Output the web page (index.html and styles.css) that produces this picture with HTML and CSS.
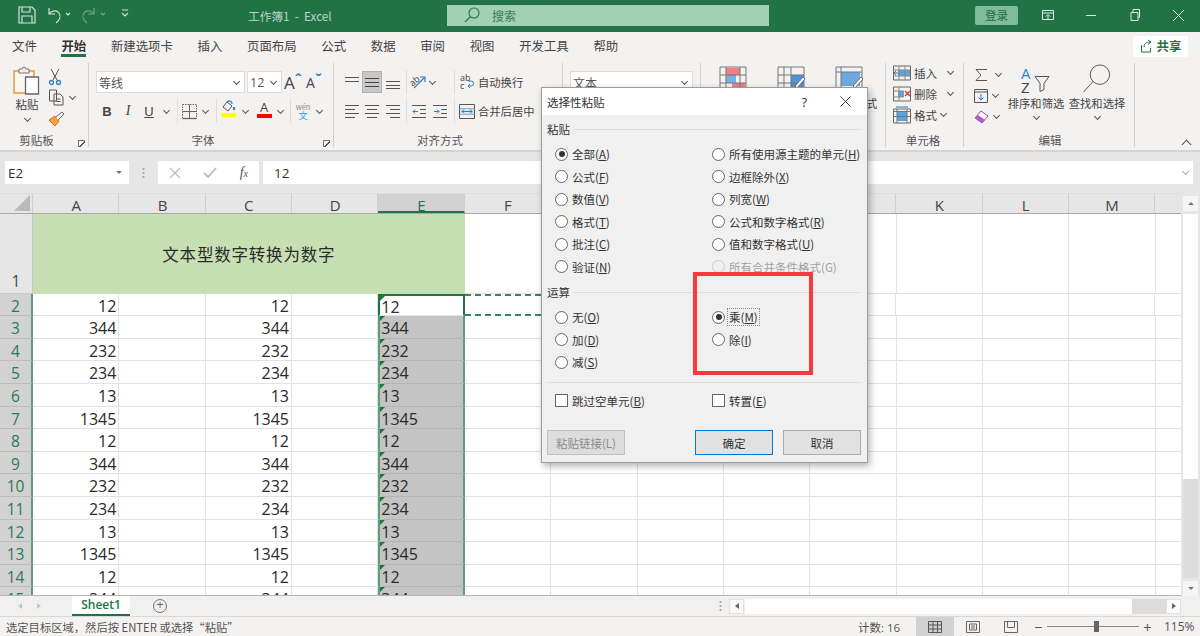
FILE: index.html
```html
<!DOCTYPE html>
<html lang="zh-CN">
<head>
    <meta charset="UTF-8">
    <title>工作簿1 - Excel</title>
    <link rel="stylesheet" href="styles.css">
</head>
<body>
<div class="app">

    <!-- title bar -->
    <header class="titlebar">
        <svg class="qat" width="248" height="32" viewBox="0 0 248 32" fill="none" stroke="#cfe3d8" stroke-width="1.2">
            <path d="M19 8h13l3 3v13H19zM22 8v5h8V8M22 24v-7h10v7"/>
            <path d="M49 9v6h6M49 15c3-4 8-4 10-1 2 3 1 7-3 10"/>
            <path d="M66 14l2 2 2-2"/>
            <g stroke="#6fa488"><path d="M94 9v6h-6M94 15c-3-4-8-4-10-1-2 3-1 7 3 10"/><path d="M101 14l2 2 2-2"/></g>
            <path d="M122 11h6M122 14l3 3 3-3"/>
        </svg>
        <div class="doc-name">工作簿1&nbsp; -&nbsp; Excel</div>
        <div class="search">
            <svg width="18" height="18" viewBox="0 0 18 18" fill="none" stroke="#2c6e4a" stroke-width="1.1"><circle cx="11" cy="7" r="5"/><path d="M7.5 10.5L2 16"/></svg>
            <span>搜索</span>
        </div>
        <div class="login">登录</div>
        <div class="winbtn"><svg width="14" height="14" viewBox="0 0 14 14" fill="none" stroke="#dcebe3"><path d="M1.5 2.5h11v9h-11zM1.5 5h11M7 11V7M5 8.5l2-2 2 2"/></svg></div>
        <div class="winbtn"><svg width="12" height="12" viewBox="0 0 12 12" stroke="#dcebe3"><path d="M1 6.5h10"/></svg></div>
        <div class="winbtn"><svg width="12" height="14" viewBox="0 0 12 14" fill="none" stroke="#dcebe3"><path d="M2 4.5h7v8H2zM4 4.5v-3h6.5v8H9"/></svg></div>
        <div class="winbtn"><svg width="13" height="13" viewBox="0 0 13 13" stroke="#dcebe3"><path d="M1 1l11 11M12 1L1 12"/></svg></div>
    </header>

    <!-- ribbon tabs -->
    <nav class="tabs">
        <span>文件</span>
        <span class="active">开始</span>
        <span>新建选项卡</span>
        <span>插入</span>
        <span>页面布局</span>
        <span>公式</span>
        <span>数据</span>
        <span>审阅</span>
        <span>视图</span>
        <span>开发工具</span>
        <span>帮助</span>
        <div class="share">
            <svg width="13" height="14" viewBox="0 0 13 14" fill="none" stroke="#217346"><path d="M1.5 6v7h9V9M4 8c0-3 2-5 6-5M8 1l3 2-3 2.5"/></svg>
            <b>共享</b>
        </div>
    </nav>

    <!-- ribbon -->
    <section class="ribbon">
        <div class="group g-clip">
            <div class="clip-body">
                <div class="paste">
                    <svg width="30" height="34" viewBox="0 0 30 34">
                        <path d="M2 5h20v22H2z" fill="#fbf5ec" stroke="#e8973f" stroke-width="1.5"/>
                        <path d="M7 3h3a2 2 0 0 1 4 0h3v4H7z" fill="#f3f2f1" stroke="#777"/>
                        <path d="M13.5 11h13v17h-13z" fill="#fff" stroke="#666" stroke-width="1.3"/>
                    </svg>
                    <span>粘贴</span>
                    <i class="chev"></i>
                </div>
                <div class="clip-tools">
                    <div class="tool-row">
                        <svg width="14" height="18" viewBox="0 0 14 18" fill="none" stroke="#555"><path d="M3 1l6 11M11 1L5 12"/><g stroke="#2f7fc4" stroke-width="1.3"><circle cx="3.5" cy="14.5" r="2"/><circle cx="10.5" cy="14.5" r="2"/></g></svg>
                    </div>
                    <div class="tool-row">
                        <svg width="17" height="17" viewBox="0 0 17 17" fill="none" stroke="#555"><path d="M1.5 1h7v11h-7zM6 5h6l3 3v8H6zM8.5 10h4M8.5 12.5h4"/></svg>
                        <i class="chev"></i>
                    </div>
                    <div class="tool-row">
                        <svg width="17" height="16" viewBox="0 0 17 16"><path d="M1 9l6-4 4 5-4 5z" fill="#f6a13b" stroke="#d9701a"/><path d="M8 6l6-5 2 2-6 6" fill="#fff" stroke="#666"/></svg>
                    </div>
                </div>
            </div>
            <div class="group-label">剪贴板<i class="launcher"></i></div>
        </div>

        <div class="group g-font">
            <div class="rows">
                <div class="rrow">
                    <div class="combo w149">等线<i class="chev"></i></div>
                    <div class="combo w35 combo-size">12<i class="chev"></i></div>
                    <div class="slot w20 big-a">A<em>ˆ</em></div>
                    <div class="slot w20 small-a">A<em>ˇ</em></div>
                </div>
                <div class="rrow">
                    <div class="slot w22 fmt"><b>B</b></div>
                    <div class="slot w20 fmt"><i>I</i></div>
                    <div class="slot w22 fmt"><u>U</u></div>
                    <div class="slot w12"><i class="chev"></i></div>
                    <div class="sep w9"></div>
                    <div class="slot w16"><svg width="15" height="15" viewBox="0 0 15 15" fill="none" stroke="#666"><path d="M.5.5h14v14H.5z" stroke-dasharray="1.5 1"/><path d="M7.5.5v14M.5 7.5h14"/><path d="M.5 14.5h14" stroke-width="1.3"/></svg></div>
                    <div class="slot w16"><i class="chev"></i></div>
                    <div class="sep w6"></div>
                    <div class="slot w18 colored">
                        <svg width="16" height="13" viewBox="0 0 16 13" fill="none"><path d="M3 7l4-5 5 4-4 5z" stroke="#555"/><path d="M7 2c2-2 5-1 5 2" stroke="#2f7fc4" stroke-width="1.3"/><path d="M14 7v3" stroke="#2f7fc4" stroke-width="2"/></svg>
                        <i class="swatch yellow"></i>
                    </div>
                    <div class="slot w16"><i class="chev"></i></div>
                    <div class="slot w22 colored">
                        <span class="font-a">A</span>
                        <i class="swatch red"></i>
                    </div>
                    <div class="slot w10"><i class="chev"></i></div>
                    <div class="sep w10"></div>
                    <div class="slot w16 wen"><span>wén</span><em>文</em></div>
                    <div class="slot w16"><i class="chev"></i></div>
                </div>
            </div>
            <div class="group-label">字体<i class="launcher"></i></div>
        </div>

        <div class="group g-align">
            <div class="rows">
                <div class="rrow">
                    <div class="slot w21"><svg width="16" height="14" viewBox="0 0 16 14" stroke="#555"><path d="M1 2.5h14M1 6.5h14"/></svg></div>
                    <div class="slot w20 pressed"><svg width="16" height="14" viewBox="0 0 16 14" stroke="#444"><path d="M1 3.5h14M1 7.5h14M1 11.5h14"/></svg></div>
                    <div class="slot w22"><svg width="16" height="14" viewBox="0 0 16 14" stroke="#555"><path d="M1 6.5h14M1 10.5h14M1 13.5h14"/></svg></div>
                    <div class="sep w4"></div>
                    <div class="slot w20"><svg width="18" height="16" viewBox="0 0 18 16" fill="none"><text x="1" y="10" transform="rotate(-40 6 8)" class="ab">ab</text><path d="M5 14L15 4M11 3h5v5" stroke="#2f7fc4" stroke-width="1.2"/></svg></div>
                    <div class="slot w9"><i class="chev"></i></div>
                    <div class="w15"></div>
                    <div class="sep w4"></div>
                    <div class="slot w22"><svg width="14" height="18" viewBox="0 0 14 18" fill="none"><text x="0" y="8" class="ab">ab</text><text x="0" y="16" class="ab">c</text><path d="M8 13h3a2.5 2.5 0 0 0 0-5H8M8 13l2-2M8 13l2 2" stroke="#2f7fc4"/></svg></div>
                    <span class="cmd">自动换行</span>
                </div>
                <div class="rrow">
                    <div class="slot w21"><svg width="16" height="14" viewBox="0 0 16 14" stroke="#555"><path d="M1 1.5h14M1 5.5h10M1 9.5h14M1 13.5h10"/></svg></div>
                    <div class="slot w20"><svg width="16" height="14" viewBox="0 0 16 14" stroke="#555"><path d="M1 1.5h14M3 5.5h10M1 9.5h14M3 13.5h10"/></svg></div>
                    <div class="slot w22"><svg width="16" height="14" viewBox="0 0 16 14" stroke="#555"><path d="M1 1.5h14M5 5.5h10M1 9.5h14M5 13.5h10"/></svg></div>
                    <div class="sep w4"></div>
                    <div class="slot w22"><svg width="16" height="14" viewBox="0 0 16 14" fill="none"><path d="M1 1.5h14M9 5.5h6M9 9.5h6M1 13.5h14" stroke="#555"/><path d="M7 7.5H2M4 5.5l-2 2 2 2" stroke="#2f7fc4"/></svg></div>
                    <div class="slot w20"><svg width="16" height="14" viewBox="0 0 16 14" fill="none"><path d="M1 1.5h14M9 5.5h6M9 9.5h6M1 13.5h14" stroke="#555"/><path d="M2 7.5h5M5 5.5l2 2-2 2" stroke="#2f7fc4"/></svg></div>
                    <div class="w2"></div>
                    <div class="sep w4"></div>
                    <div class="slot w22"><svg width="16" height="15" viewBox="0 0 16 15" fill="none"><path d="M.5.5h15v14H.5z" stroke="#555"/><path d="M.5 4.5h15M.5 10.5h15" stroke="#777"/><path d="M1 4.5h14v6H1z" fill="#cfe4f5"/><path d="M3 7.5h10M5 5.5l-2 2 2 2M11 5.5l2 2-2 2" stroke="#2f7fc4"/></svg></div>
                    <span class="cmd">合并后居中</span>
                </div>
            </div>
            <div class="group-label">对齐方式</div>
        </div>

        <div class="group g-number">
            <div class="rows">
                <div class="rrow"><div class="combo w123">文本<i class="chev"></i></div></div>
            </div>
            <div class="group-label">数字</div>
        </div>

        <div class="group g-styles">
            <div class="style-body">
                <div class="style-btn">
                    <svg width="32" height="30" viewBox="0 0 32 30" fill="none"><path d="M3 1h26v26H3z" stroke="#777"/><path d="M9 2h14v7H9zM15 17h14v8H15z" fill="#f07f86"/><path d="M9 9h10v8H9z" fill="#78b1e4"/><path d="M3 9h26M3 17h26M9 1v26M23 1v26" stroke="#777"/></svg>
                    <span>条件格式</span>
                </div>
                <div class="style-btn">
                    <svg width="32" height="30" viewBox="0 0 32 30" fill="none"><path d="M3 1h26v26H3z" stroke="#777"/><path d="M16 9h13v12H16z" fill="#4d94d8"/><path d="M3 9h26M3 17h26M9 1v26M16 1v26" stroke="#777"/><path d="M20 20l8-9 2 2-8 9z" fill="#fff" stroke="#666"/></svg>
                    <span>套用<br>表格格式</span>
                </div>
                <div class="style-btn">
                    <svg width="32" height="30" viewBox="0 0 32 30" fill="none"><path d="M3 1h26v26H3z" stroke="#777"/><path d="M8 6h19v14H8z" fill="#6fa8e0"/><path d="M3 6h26M8 1v26" stroke="#777"/><path d="M20 20l8-9 2 2-8 9z" fill="#fff" stroke="#666"/></svg>
                    <span>单元格样式</span>
                </div>
            </div>
            <div class="group-label">样式</div>
        </div>

        <div class="group g-cells">
            <div class="cell-rows">
                <div class="cell-row">
                    <svg width="18" height="16" viewBox="0 0 18 16" fill="none"><path d="M.5 1h17v14H.5z" stroke="#666"/><path d="M5 5h12v6H5z" fill="#5aa4e0"/><path d="M6 1v14M12 1v14M.5 5h17M.5 11h17" stroke="#888"/><path d="M5 8H1M3 6L1 8l2 2" stroke="#1f78c8"/></svg>
                    <span class="w23">插入</span><i class="chev cell-chev"></i>
                </div>
                <div class="cell-row">
                    <svg width="18" height="16" viewBox="0 0 18 16" fill="none"><path d="M.5 1h17v14H.5z" stroke="#666"/><path d="M5 5h6v6H5z" fill="#5aa4e0"/><path d="M.5 5h10M.5 11h10M6 1v14" stroke="#888"/><path d="M12 5l5 5M17 5l-5 5" stroke="#e0323a" stroke-width="1.4"/></svg>
                    <span class="w23">删除</span><i class="chev cell-chev"></i>
                </div>
                <div class="cell-row">
                    <svg width="18" height="18" viewBox="0 0 18 18" fill="none"><path d="M.5 3h17v14H.5z" stroke="#666"/><path d="M4 5h10v10H4z" fill="#5aa4e0"/><path d="M.5 5.5h17M.5 10.5h17M4 3v14M14 3v14" stroke="#777"/><path d="M3 1h12" stroke="#1f78c8"/></svg>
                    <span class="w23">格式</span><i class="chev chev-near"></i>
                </div>
            </div>
            <div class="group-label">单元格</div>
        </div>

        <div class="group g-edit">
            <div class="edit-body">
                <div class="edit-tools">
                    <div class="edit-row">
                        <svg width="14" height="14" viewBox="0 0 14 14" fill="none" stroke="#555"><path d="M13 1.5H2l5 5.5-5 5.5h11"/></svg>
                        <i class="chev chev-far"></i>
                    </div>
                    <div class="edit-row">
                        <svg width="14" height="14" viewBox="0 0 14 14" fill="none"><path d="M.5.5h13v13H.5zM.5 3h13" stroke="#555"/><path d="M7 5v6M4.5 8.5L7 11l2.5-2.5" stroke="#1f78c8"/></svg>
                        <i class="chev"></i>
                    </div>
                    <div class="edit-row">
                        <svg width="15" height="14" viewBox="0 0 15 14"><path d="M1 8l6-7 7 5-6 7z" fill="#fff" stroke="#a24bb3"/><path d="M1 8l3-3 7 5-3 3z" fill="#b35cc4"/></svg>
                        <i class="chev"></i>
                    </div>
                </div>
                <div class="edit-big">
                    <svg width="30" height="29" viewBox="0 0 30 29" fill="none"><text x="0" y="13" class="az az-a">A</text><text x="0" y="27" class="az">Z</text><path d="M14 11h14l-5 7v6l-4 2v-8z" stroke="#555"/></svg>
                    <span>排序和筛选</span>
                    <i class="chev"></i>
                </div>
                <div class="edit-big">
                    <svg width="30" height="33" viewBox="0 0 30 33" fill="none" stroke="#555"><circle cx="18" cy="11" r="10"/><path d="M11 18L1 29"/></svg>
                    <span>查找和选择</span>
                    <i class="chev"></i>
                </div>
            </div>
            <div class="group-label">编辑</div>
        </div>

        <div class="ribbon-end"><i class="chev chev-up"></i></div>
    </section>

    <!-- formula bar -->
    <section class="formula">
        <div class="namebox">E2<i class="tri"></i></div>
        <div class="grip"></div>
        <div class="fx-box">
            <svg width="12" height="12" viewBox="0 0 12 12" stroke="#bbb" stroke-width="1.3"><path d="M1 1l10 10M11 1L1 11"/></svg>
            <svg width="14" height="12" viewBox="0 0 14 12" fill="none" stroke="#bbb" stroke-width="1.8"><path d="M1 6l4 4 8-9"/></svg>
            <span>f<small>x</small></span>
        </div>
        <div class="input">12<i class="chev"></i></div>
    </section>

    <!-- sheet -->
    <section class="main">
        <div class="sheet">
            <div class="colhead">
                <div class="corner"><i></i></div>
                <div>A</div><div>B</div><div>C</div><div>D</div><div class="on">E</div><div>F</div>
                <div>G</div><div>H</div><div>I</div><div>J</div><div>K</div><div>L</div><div>M</div><div></div>
            </div>
            <div class="row row-title">
                <div class="rh">1</div>
                <div class="merged">文本型数字转换为数字</div>
                <div class="fill"></div>
            </div>
            <div class="row">
                <div class="rh on">2</div><div class="c n">12</div><div class="c"></div><div class="c n">12</div><div class="c"></div>
                <div class="c t active-cell">12</div><div class="c ants"></div><div class="fill"></div>
            </div>
            <div class="row">
                <div class="rh on">3</div><div class="c n">344</div><div class="c"></div><div class="c n">344</div><div class="c"></div>
                <div class="c t sel">344</div><div class="fill"></div>
            </div>
            <div class="row">
                <div class="rh on">4</div><div class="c n">232</div><div class="c"></div><div class="c n">232</div><div class="c"></div>
                <div class="c t sel">232</div><div class="fill"></div>
            </div>
            <div class="row">
                <div class="rh on">5</div><div class="c n">234</div><div class="c"></div><div class="c n">234</div><div class="c"></div>
                <div class="c t sel">234</div><div class="fill"></div>
            </div>
            <div class="row">
                <div class="rh on">6</div><div class="c n">13</div><div class="c"></div><div class="c n">13</div><div class="c"></div>
                <div class="c t sel">13</div><div class="fill"></div>
            </div>
            <div class="row">
                <div class="rh on">7</div><div class="c n">1345</div><div class="c"></div><div class="c n">1345</div><div class="c"></div>
                <div class="c t sel">1345</div><div class="fill"></div>
            </div>
            <div class="row">
                <div class="rh on">8</div><div class="c n">12</div><div class="c"></div><div class="c n">12</div><div class="c"></div>
                <div class="c t sel">12</div><div class="fill"></div>
            </div>
            <div class="row">
                <div class="rh on">9</div><div class="c n">344</div><div class="c"></div><div class="c n">344</div><div class="c"></div>
                <div class="c t sel">344</div><div class="fill"></div>
            </div>
            <div class="row">
                <div class="rh on">10</div><div class="c n">232</div><div class="c"></div><div class="c n">232</div><div class="c"></div>
                <div class="c t sel">232</div><div class="fill"></div>
            </div>
            <div class="row">
                <div class="rh on">11</div><div class="c n">234</div><div class="c"></div><div class="c n">234</div><div class="c"></div>
                <div class="c t sel">234</div><div class="fill"></div>
            </div>
            <div class="row">
                <div class="rh on">12</div><div class="c n">13</div><div class="c"></div><div class="c n">13</div><div class="c"></div>
                <div class="c t sel">13</div><div class="fill"></div>
            </div>
            <div class="row">
                <div class="rh on">13</div><div class="c n">1345</div><div class="c"></div><div class="c n">1345</div><div class="c"></div>
                <div class="c t sel">1345</div><div class="fill"></div>
            </div>
            <div class="row">
                <div class="rh on">14</div><div class="c n">12</div><div class="c"></div><div class="c n">12</div><div class="c"></div>
                <div class="c t sel">12</div><div class="fill"></div>
            </div>
            <div class="row">
                <div class="rh on">15</div><div class="c n">344</div><div class="c"></div><div class="c n">344</div><div class="c"></div>
                <div class="c t sel">344</div><div class="fill"></div>
            </div>
        </div>
        <div class="vscroll">
            <div class="sb-btn"><i class="tri tri-up"></i></div>
            <div class="sb-thumb"></div>
            <div class="sb-track"></div>
            <div class="sb-btn"><i class="tri"></i></div>
        </div>
    </section>

    <!-- sheet tabs -->
    <section class="sheetbar">
        <div class="nav-arrows"><i class="arrow-l"></i><i class="arrow-r"></i></div>
        <div class="sheet-tab">Sheet1</div>
        <div class="add-sheet">+</div>
        <div class="grip-h"></div>
        <div class="hscroll">
            <div class="hs-btn"><i class="arrow-l dark"></i></div>
            <div class="hs-thumb"></div>
            <div class="hs-track"></div>
            <div class="hs-btn"><i class="arrow-r dark"></i></div>
        </div>
    </section>

    <!-- status bar -->
    <footer class="status">
        <span class="status-msg">选定目标区域，然后按 ENTER 或选择“粘贴”</span>
        <span class="count">计数: 16</span>
        <div class="view on"><svg width="14" height="12" viewBox="0 0 14 12" fill="none" stroke="#555"><path d="M.5.5h13v11H.5zM.5 4h13M.5 8h13M5 .5v11M9.5.5v11"/></svg></div>
        <div class="view"><svg width="14" height="12" viewBox="0 0 14 12" fill="none" stroke="#666"><path d="M.5.5h13v11H.5zM3.5 3h7v6h-7zM5 5h4M5 7h4"/></svg></div>
        <div class="view"><svg width="14" height="12" viewBox="0 0 14 12" fill="none" stroke="#666"><path d="M.5.5h13v11H.5zM3.5.5v6h7v-6"/></svg></div>
        <div class="zoom">
            <span class="zoom-sign">−</span>
            <div class="zoom-track"><i></i></div>
            <span class="zoom-sign">+</span>
        </div>
        <span class="pct">115%</span>
    </footer>

    <!-- paste special dialog -->
    <div class="dialog">
        <div class="dlg-title">
            <span>选择性粘贴</span>
            <em>?</em>
            <svg width="11" height="11" viewBox="0 0 11 11" stroke="#444"><path d="M.5.5l10 10M10.5.5l-10 10"/></svg>
        </div>
        <div class="dlg-body">
            <div class="legend">粘贴</div>
            <div class="opts">
                <label class="opt"><i class="radio checked"></i><span>全部(<u>A</u>)</span></label>
                <label class="opt"><i class="radio"></i><span>所有使用源主题的单元(<u>H</u>)</span></label>
                <label class="opt"><i class="radio"></i><span>公式(<u>F</u>)</span></label>
                <label class="opt"><i class="radio"></i><span>边框除外(<u>X</u>)</span></label>
                <label class="opt"><i class="radio"></i><span>数值(<u>V</u>)</span></label>
                <label class="opt"><i class="radio"></i><span>列宽(<u>W</u>)</span></label>
                <label class="opt"><i class="radio"></i><span>格式(<u>T</u>)</span></label>
                <label class="opt"><i class="radio"></i><span>公式和数字格式(<u>R</u>)</span></label>
                <label class="opt"><i class="radio"></i><span>批注(<u>C</u>)</span></label>
                <label class="opt"><i class="radio"></i><span>值和数字格式(<u>U</u>)</span></label>
                <label class="opt"><i class="radio"></i><span>验证(<u>N</u>)</span></label>
                <label class="opt disabled"><i class="radio"></i><span>所有合并条件格式(G)</span></label>
            </div>
            <div class="legend legend-ops">运算</div>
            <div class="opts">
                <label class="opt"><i class="radio"></i><span>无(<u>O</u>)</span></label>
                <label class="opt"><i class="radio checked"></i><span class="focus">乘(<u>M</u>)</span></label>
                <label class="opt"><i class="radio"></i><span>加(<u>D</u>)</span></label>
                <label class="opt"><i class="radio"></i><span>除(<u>I</u>)</span></label>
                <label class="opt"><i class="radio"></i><span>减(<u>S</u>)</span></label>
            </div>
            <div class="dlg-rule"></div>
            <div class="opts">
                <label class="opt"><i class="check"></i><span>跳过空单元(<u>B</u>)</span></label>
                <label class="opt"><i class="check"></i><span>转置(<u>E</u>)</span></label>
            </div>
            <div class="dlg-btns">
                <button class="btn" disabled>粘贴链接(L)</button>
                <button class="btn default">确定</button>
                <button class="btn">取消</button>
            </div>
        </div>
    </div>

    <!-- red annotation box drawn over the dialog -->
    <div class="annot"></div>
</div>
</body>
</html>
```

FILE: styles.css
```css
* { box-sizing: border-box; }

html, body {
    margin: 0;
    padding: 0;
    height: 636px;
    overflow: hidden;
}

body {
    font-family: "Noto Sans CJK SC", "Liberation Sans", sans-serif;
    font-size: 12px;
    color: #444;
    background: #f3f2f1;
}

i, em { font-style: normal; }

svg { overflow: visible; }

.app {
    position: relative;
    display: flex;
    flex-direction: column;
    width: 1200px;
    height: 636px;
    overflow: hidden;
}

/* title bar */
.titlebar {
    display: flex;
    align-items: center;
    flex: none;
    height: 32px;
    padding-bottom: 2px;
    background: #217346;
    color: #cfe3d8;
}
.qat { flex: none; }
.doc-name {
    width: 199px;
    font-size: 11.7px;
    color: #bcd7c8;
}
.search {
    display: flex;
    align-items: center;
    width: 322px;
    height: 21px;
    padding-left: 16px;
    background: #a1d0b3;
    color: #3d7a59;
    font-size: 12px;
}
.search span { margin-left: 11px; }
.login {
    width: 43px;
    height: 19px;
    margin-left: 206px;
    margin-right: 8px;
    border-radius: 2px;
    background: #7fbb98;
    color: #1e6b42;
    font-size: 11.5px;
    line-height: 19px;
    text-align: center;
}
.winbtn {
    display: flex;
    align-items: center;
    justify-content: center;
    width: 43.5px;
    height: 30px;
}

/* tabs */
.tabs {
    display: flex;
    align-items: center;
    flex: none;
    gap: 24.7px;
    height: 28px;
    padding-left: 12px;
    background: #f3f2f1;
    font-size: 12.4px;
    color: #444;
}
.tabs > span {
    position: relative;
    line-height: 28px;
}
.tabs .active {
    font-weight: 700;
    color: #333;
}
.tabs .active::after {
    content: "";
    position: absolute;
    left: 0;
    right: 0;
    bottom: 3px;
    height: 3px;
    background: #217346;
}
.share {
    display: flex;
    align-items: center;
    justify-content: center;
    gap: 4px;
    width: 55px;
    height: 21px;
    margin-left: auto;
    margin-right: 12px;
    border-radius: 2px;
    background: #fff;
    color: #217346;
}

/* ribbon */
.ribbon {
    display: flex;
    flex: none;
    height: 92px;
    padding-bottom: 2px;
    background: #f3f2f1;
    border-bottom: 2px solid #d4d4d4;
}
.group {
    position: relative;
    display: flex;
    flex-direction: column;
    flex: none;
    height: 90px;
}
.group::after {
    content: "";
    position: absolute;
    top: 3px;
    right: 0;
    bottom: 3px;
    width: 1px;
    background: #cfcfcf;
}
.group-label {
    height: 20px;
    margin-top: auto;
    text-align: center;
    font-size: 11.5px;
    line-height: 20px;
    color: #555;
}
.launcher {
    position: absolute;
    right: 4px;
    bottom: 3px;
    width: 7px;
    height: 7px;
    border-left: 1px solid #777;
    border-top: 1px solid #777;
    background: linear-gradient(135deg, transparent 45%, #555 45% 60%, transparent 60%);
}
.g-clip { width: 89px; }
.g-clip .group-label { margin-right: 16px; }
.g-font { width: 245px; padding-left: 7px; }
.g-font .group-label { margin-right: 24px; }
.g-align { width: 229px; padding-left: 7px; }
.g-align .group-label { margin-right: 24px; }
.g-number { width: 138px; padding-left: 7px; }
.g-styles { width: 185px; }
.g-cells { width: 78px; padding-left: 7px; }
.g-cells .group-label { margin-right: 11px; }
.g-edit { width: 171px; padding-left: 7px; }
.g-edit .group-label { margin-right: 6px; }
.ribbon-end {
    display: flex;
    flex: 1;
    align-items: flex-end;
    justify-content: flex-end;
    padding: 0 10px 3px 0;
}

.rows {
    display: flex;
    flex-direction: column;
    gap: 7px;
    padding-top: 11px;
}
.rrow {
    display: flex;
    align-items: center;
    height: 22px;
}
.slot {
    display: flex;
    align-items: center;
    justify-content: center;
    flex: none;
    height: 22px;
}
.w2 { width: 2px; flex: none; }
.w4 { width: 4px; }
.w6 { width: 6px; }
.w9 { width: 9px; }
.w10 { width: 10px; }
.w12 { width: 12px; }
.w15 { width: 15px; flex: none; }
.w16 { width: 16px; }
.w18 { width: 18px; }
.w20 { width: 20px; }
.w21 { width: 21px; }
.w22 { width: 22px; }
.w23 { width: 23px; flex: none; }
.w35 { width: 35px; }
.w123 { width: 123px; }
.w149 { width: 149px; }

.sep {
    position: relative;
    flex: none;
    height: 24px;
}
.sep::before {
    content: "";
    position: absolute;
    left: 50%;
    top: 0;
    bottom: 0;
    width: 1px;
    background: #dcdcdc;
}

.chev {
    display: inline-block;
    flex: none;
    width: 5px;
    height: 5px;
    border-right: 1px solid #555;
    border-bottom: 1px solid #555;
    transform: translateY(-1px) rotate(45deg);
}
.chev-up {
    width: 7px;
    height: 7px;
    transform: translateY(3px) rotate(225deg);
}
.combo {
    display: flex;
    align-items: center;
    justify-content: space-between;
    flex: none;
    height: 22px;
    padding: 0 5px 0 2px;
    border: 1px solid #dcdcdc;
    background: #fff;
    font-size: 12px;
    color: #555;
}
.combo-size {
    margin-left: 2px;
    font-family: "Open Sans", sans-serif;
    font-size: 12.5px;
}
.big-a, .small-a {
    position: relative;
    margin-left: 1px;
    font-family: "Open Sans", sans-serif;
    color: #444;
    font-size: 17px;
}
.small-a { font-size: 14px; }
.big-a em, .small-a em {
    align-self: flex-start;
    font-size: 14px;
    line-height: 18px;
    color: #2f7fc4;
    font-weight: 700;
}
.fmt {
    font-family: "Liberation Sans", sans-serif;
    font-size: 13px;
    color: #444;
}
.fmt i {
    font-family: "Liberation Serif", serif;
    font-style: italic;
    font-size: 14px;
}
.colored {
    flex-direction: column;
    justify-content: flex-start;
}
.font-a {
    font-family: "Open Sans", sans-serif;
    font-size: 13px;
    line-height: 14px;
    color: #444;
}
.swatch {
    display: block;
    width: 15px;
    height: 4px;
}
.yellow { background: #ffff00; }
.red { background: #ff0000; }
.wen {
    flex-direction: column;
    color: #888;
    font-size: 7.5px;
    line-height: 9px;
}
.wen em {
    color: #2f9be0;
    font-size: 9px;
    line-height: 10px;
}
.pressed {
    background: #c8c8c8;
    border: 1px solid #b2b2b2;
}
.ab {
    font-family: "Open Sans", sans-serif;
    font-size: 9px;
    fill: #444;
}
.cmd {
    font-size: 11.3px;
    white-space: nowrap;
    color: #444;
}

/* clipboard */
.clip-body {
    display: flex;
    padding-top: 6px;
}
.paste {
    display: flex;
    flex-direction: column;
    align-items: center;
    width: 43px;
    padding-left: 11px;
    font-size: 11.5px;
    line-height: 16px;
}
.paste svg { margin-bottom: -4px; }
.paste .chev { margin-top: 5px; }
.clip-tools {
    display: flex;
    flex-direction: column;
    width: 40px;
    padding-left: 5px;
}
.tool-row {
    display: flex;
    align-items: center;
    gap: 5px;
    height: 21px;
}

/* styles group, mostly behind the dialog */
.style-body {
    display: flex;
    padding: 6px 0 0 3px;
}
.style-btn {
    display: flex;
    flex-direction: column;
    align-items: center;
    width: 58px;
    font-size: 11.3px;
    line-height: 15px;
    text-align: center;
    white-space: nowrap;
}

/* cells */
.cell-rows {
    display: flex;
    flex-direction: column;
    padding-top: 2px;
}
.cell-row {
    display: flex;
    align-items: center;
    gap: 3px;
    height: 21px;
    font-size: 11.5px;
    white-space: nowrap;
}
.cell-chev { margin-left: 8px; }
.chev-near { margin-left: 1px; }

/* editing */
.edit-body {
    display: flex;
    gap: 5px;
    padding-top: 4px;
}
.edit-tools {
    display: flex;
    flex-direction: column;
    width: 37px;
    margin-right: -5px;
    padding-left: 3px;
}
.edit-row {
    display: flex;
    align-items: center;
    gap: 5px;
    height: 21px;
}
.chev-far { margin-left: 3px; }
.edit-big {
    display: flex;
    flex-direction: column;
    align-items: center;
    flex: none;
    width: 56px;
    height: 64px;
    font-size: 11.3px;
    line-height: 15px;
    white-space: nowrap;
}
.edit-big svg { flex: none; height: 32px; }
.edit-big .chev { margin-top: 4px; }
.az {
    font-family: "Open Sans", sans-serif;
    font-size: 15px;
    fill: #444;
}
.az-a { fill: #2f7fc4; }

/* formula bar */
.formula {
    display: flex;
    align-items: center;
    flex: none;
    height: 41px;
    padding: 0 7px 0 5px;
    background: #e6e6e6;
}
.namebox {
    display: flex;
    align-items: center;
    justify-content: space-between;
    width: 124px;
    height: 23px;
    padding: 0 7px 0 3px;
    background: #fff;
    font-family: "Open Sans", sans-serif;
    font-size: 13.5px;
    color: #333;
}
.tri {
    display: block;
    width: 0;
    height: 0;
    border-left: 3px solid transparent;
    border-right: 3px solid transparent;
    border-top: 3px solid #777;
}
.tri-up {
    border-top: 0;
    border-bottom: 3px solid #777;
}
.grip {
    width: 29px;
    height: 12px;
    background: radial-gradient(circle, #aaa 1px, transparent 1.2px) center / 3px 4px repeat-y;
}
.fx-box {
    display: flex;
    align-items: center;
    justify-content: space-between;
    width: 101px;
    height: 23px;
    padding: 0 11px;
    background: #fff;
}
.fx-box span {
    font-family: "Liberation Serif", serif;
    font-style: italic;
    font-size: 14px;
    color: #555;
}
.fx-box small { font-size: 10px; }
.input {
    display: flex;
    align-items: center;
    justify-content: space-between;
    flex: 1;
    height: 23px;
    margin-left: 4px;
    padding: 0 5px 0 11px;
    background: #fff;
    font-family: "Open Sans", sans-serif;
    font-size: 13.5px;
    color: #333;
}
.input .chev { border-color: #aaa; }

/* sheet */
.main {
    display: flex;
    flex: none;
    height: 403px;
}
.sheet {
    width: 1181px;
    height: 403px;
    overflow: hidden;
    background: #fff;
    font-family: "Open Sans", "Noto Sans CJK SC", sans-serif;
    border-bottom: 1px solid #b5b5b5;
}
.colhead {
    display: flex;
    height: 21px;
    background: #e6e6e6;
    font-size: 15px;
    line-height: 22px;
    color: #444;
    border-top: 1px solid #dcdcdc;
    border-bottom: 1px solid #a8a8a8;
}
.colhead > div {
    flex: none;
    width: 86.33px;
    padding-left: 1px;
    border-right: 1px solid #cfcfcf;
    text-align: center;
}
.colhead > .corner {
    position: relative;
    width: 33px;
}
.corner i {
    position: absolute;
    right: 2px;
    bottom: 2px;
    width: 0;
    height: 0;
    border-left: 16px solid transparent;
    border-bottom: 16px solid #b9b9b9;
}
.colhead > .on {
    background: #d2d2d2;
    color: #217346;
    border-bottom: 2px solid #217346;
}
.row {
    display: flex;
    height: 22.6px;
    font-size: 16px;
    line-height: 24px;
    color: #2a2a2a;
}
.row-title { height: 79.6px; }
.rh {
    flex: none;
    width: 33px;
    background: #e6e6e6;
    border-bottom: 1px solid #c8c8c8;
    border-right: 1px solid #c8c8c8;
    text-align: center;
    font-size: 15.5px;
    color: #444;
}
.rh.on {
    background: #d2d2d2;
    border-bottom-color: #bcbcbc;
    border-right: 2px solid #5f9c7d;
    color: #2d7a52;
}
.row-title .rh {
    display: flex;
    align-items: flex-end;
    justify-content: center;
}
.merged {
    display: flex;
    flex: none;
    align-items: center;
    justify-content: center;
    width: 431.65px;
    padding-top: 3px;
    background: #c6e0b4;
    font-size: 16.5px;
    letter-spacing: 0.8px;
    color: #2a2a2a;
}
.c {
    position: relative;
    flex: none;
    width: 86.33px;
    overflow: hidden;
    border-right: 1px solid #e2e2e2;
    border-bottom: 1px solid #e2e2e2;
}
.n {
    padding-right: 2px;
    text-align: right;
}
.t { padding-left: 1px; }
.t::before {
    content: "";
    position: absolute;
    left: 0;
    top: 0;
    width: 0;
    height: 0;
    border-top: 5px solid #187a34;
    border-right: 5px solid transparent;
}
.sel {
    background: #c4c4c4;
    border-left: 2px solid #5f9c7d;
    border-right: 2px solid #5f9c7d;
    border-bottom-color: #b4b4b4;
}
.active-cell {
    background: #fff;
    border: 2px solid #217346;
    border-bottom: 1px solid #e2e2e2;
    line-height: 22px;
}
.ants {
    border-top: 2px dashed #2f8a5a;
    border-bottom: 2px dashed #2f8a5a;
}
.fill {
    flex: 1;
    border-bottom: 1px solid #e2e2e2;
    background: repeating-linear-gradient(to right, transparent 0 85.33px, #e2e2e2 85.33px 86.33px);
}

.vscroll {
    display: flex;
    flex-direction: column;
    width: 19px;
    padding-left: 1px;
    background: #e6e6e6;
}
.sb-btn {
    display: flex;
    align-items: center;
    justify-content: center;
    flex: none;
    height: 15px;
    margin: 3px 2px 0 1px;
    background: #f5f5f5;
}
.sb-thumb {
    flex: none;
    height: 265px;
    margin: 3px 2px 0 1px;
    background: #fff;
}
.sb-track {
    flex: 1;
    margin: 0 2px 0 1px;
    background: #dcdcdc;
}

/* sheet tabs */
.sheetbar {
    display: flex;
    align-items: center;
    flex: none;
    height: 21px;
    background: #f0f0f0;
    border-bottom: 1px solid #d8d8d8;
}
.nav-arrows {
    display: flex;
    align-items: center;
    gap: 15px;
    width: 72px;
    padding-left: 18px;
}
.arrow-l, .arrow-r {
    display: block;
    width: 0;
    height: 0;
    border-top: 3px solid transparent;
    border-bottom: 3px solid transparent;
}
.arrow-l { border-right: 4px solid #c4c4c4; }
.arrow-r { border-left: 4px solid #c4c4c4; }
.arrow-l.dark { border-right-color: #666; }
.arrow-r.dark { border-left-color: #666; }
.sheet-tab {
    width: 58px;
    height: 20px;
    margin-top: -1px;
    background: #fff;
    border-bottom: 2px solid #217346;
    font-family: "Open Sans", sans-serif;
    font-size: 12px;
    font-weight: 600;
    line-height: 17px;
    text-align: center;
    color: #217346;
}
.add-sheet {
    width: 14px;
    height: 14px;
    margin-left: 23px;
    border: 1px solid #777;
    border-radius: 50%;
    font-family: "Liberation Sans", sans-serif;
    font-size: 12px;
    line-height: 11px;
    text-align: center;
    color: #666;
}
.grip-h {
    width: 3px;
    height: 10px;
    margin-left: 552px;
    background: radial-gradient(circle, #aaa 1px, transparent 1.2px) center / 3px 4px repeat-y;
}
.hscroll {
    display: flex;
    align-items: center;
    width: 452px;
    height: 15px;
    margin-left: 7px;
}
.hs-btn {
    display: flex;
    align-items: center;
    justify-content: center;
    flex: none;
    width: 15px;
    height: 15px;
    background: #fafafa;
    border: 1px solid #e2e2e2;
}
.hs-thumb {
    flex: none;
    width: 387px;
    height: 15px;
    margin-left: 1px;
    background: #fff;
}
.hs-track {
    flex: 1;
    height: 15px;
    background: #dcdcdc;
}

/* status bar */
.status {
    display: flex;
    align-items: center;
    flex: 1;
    padding-left: 6px;
    background: #f3f2f1;
    font-size: 11.3px;
    color: #555;
}
.status-msg {
    flex: none;
    width: 852px;
    white-space: nowrap;
}
.count {
    flex: none;
    width: 58px;
    font-family: "Open Sans", "Noto Sans CJK SC", sans-serif;
    font-size: 11.5px;
}
.view {
    display: flex;
    align-items: center;
    justify-content: center;
    flex: none;
    width: 38px;
    height: 19px;
}
.view.on { background: #d2d2d2; }
.zoom {
    display: flex;
    align-items: center;
    flex: none;
}
.zoom-sign {
    width: 17px;
    font-size: 14px;
    line-height: 14px;
    text-align: center;
}
.zoom-track {
    position: relative;
    width: 92px;
    height: 1px;
    background: #888;
}
.zoom-track i {
    position: absolute;
    left: 47px;
    top: -5px;
    width: 5px;
    height: 11px;
    background: #666;
}
.pct {
    margin-left: 8px;
    font-family: "Open Sans", sans-serif;
    font-size: 12px;
}

/* dialog */
.dialog {
    position: absolute;
    left: 541px;
    top: 87px;
    width: 327px;
    height: 376px;
    background: #f0f0f0;
    border: 1px solid #9b9b9b;
    box-shadow: 2px 3px 7px rgba(0, 0, 0, 0.3);
    font-size: 11.5px;
    color: #333;
}
.dlg-title {
    display: flex;
    align-items: center;
    height: 27px;
    padding-left: 5px;
    background: #fff;
}
.dlg-title em {
    margin-left: auto;
    margin-right: 33px;
    font-family: "Open Sans", sans-serif;
    font-size: 13px;
}
.dlg-title svg { margin-right: 16px; }
.dlg-body { padding: 0 6px 0 5px; }
.legend {
    display: flex;
    align-items: center;
    gap: 3px;
    height: 16px;
    margin-top: 6px;
}
.legend::after {
    content: "";
    flex: 1;
    height: 1px;
    background: #dcdcdc;
}
.opts {
    display: grid;
    grid-template-columns: 157px 1fr;
    grid-auto-rows: 22.5px;
    margin-top: 6px;
    padding-left: 8px;
}
.opt {
    display: flex;
    align-items: center;
    gap: 4px;
    white-space: nowrap;
}
.radio {
    position: relative;
    flex: none;
    width: 13px;
    height: 13px;
    border: 1px solid #666;
    border-radius: 50%;
    background: #fff;
}
.radio.checked::before {
    content: "";
    position: absolute;
    left: 2.5px;
    top: 2.5px;
    width: 6px;
    height: 6px;
    border-radius: 50%;
    background: #333;
}
.check {
    flex: none;
    width: 13px;
    height: 13px;
    border: 1px solid #666;
    background: #fff;
}
.disabled { color: #a2a2a2; }
.disabled .radio {
    border-color: #ccc;
    background: #f0f0f0;
}
.focus {
    margin-left: -1px;
    padding: 0 1px;
    outline: 1px dotted #888;
    line-height: 16px;
}
.dlg-rule {
    height: 1px;
    margin-top: 8px;
    background: #dcdcdc;
}
.dlg-rule + .opts { margin-top: 7px; }
.dlg-btns {
    display: flex;
    margin-top: 18px;
}
.btn {
    width: 78px;
    height: 25px;
    padding: 0;
    border: 1px solid #adadad;
    background: #e1e1e1;
    font-family: "Noto Sans CJK SC", sans-serif;
    font-size: 11.5px;
    color: #333;
}
.btn:disabled {
    color: #8c8c8c;
    background: #dcdcdc;
    border-color: #bfbfbf;
}
.btn.default {
    margin-left: 70px;
    border: 1px solid #0078d7;
    box-shadow: inset 0 0 0 1px #e1e1e1;
}
.btn.default + .btn { margin-left: 10px; }

.annot {
    position: absolute;
    left: 693px;
    top: 272px;
    width: 120px;
    height: 103px;
    border: 4px solid #f83a3f;
}
```
